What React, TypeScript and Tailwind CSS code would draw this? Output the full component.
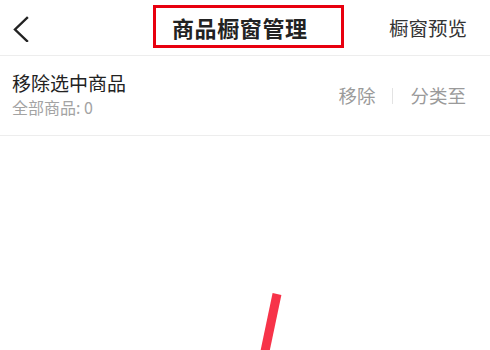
const font = { fontFamily: '"Noto Sans CJK SC", "Noto Sans", sans-serif' };

export default function App() {
  return (
    <div className="relative w-[490px] h-[350px] bg-white overflow-hidden" style={font}>
      <header className="relative h-[56px] flex items-center justify-between border-b border-[#ededed]">
        <button className="pl-[12px] text-[#222]">
          <svg width="18" height="28" viewBox="0 0 18 28" fill="none">
            <polyline points="15,4 3,15.5 15,27" stroke="#222" strokeWidth="2.4" strokeLinecap="square" />
          </svg>
        </button>
        <div className="absolute left-[153px] top-[5px] w-[191px] h-[43px] border-[3px] border-[#e8000f] flex items-center pl-[16px]">
          <span className="text-[22px] font-semibold text-[#222] leading-none tracking-[0.6px]">商品橱窗管理</span>
        </div>
        <span className="pr-[23px] text-[19.5px] text-[#333] leading-none">橱窗预览</span>
      </header>
      <div className="h-[80px] flex items-center justify-between border-b border-[#ededed] px-[12px]">
        <div className="flex flex-col -mt-[4px]">
          <span className="text-[19px] text-[#222] leading-[26px]">移除选中商品</span>
          <span className="text-[16px] text-[#a3a3a3] leading-[22px]">全部商品: 0</span>
        </div>
        <div className="flex items-center pr-[12px] text-[18.5px] text-[#9a9a9a]">
          <span>移除</span>
          <span className="mx-[17px] w-px h-[16px] bg-[#e3e3e3]" />
          <span>分类至</span>
        </div>
      </div>
      <svg className="absolute left-0 top-0" width="490" height="350">
        <line x1="277" y1="294" x2="264" y2="356" stroke="#f73349" strokeWidth="9" />
      </svg>
    </div>
  );
}
